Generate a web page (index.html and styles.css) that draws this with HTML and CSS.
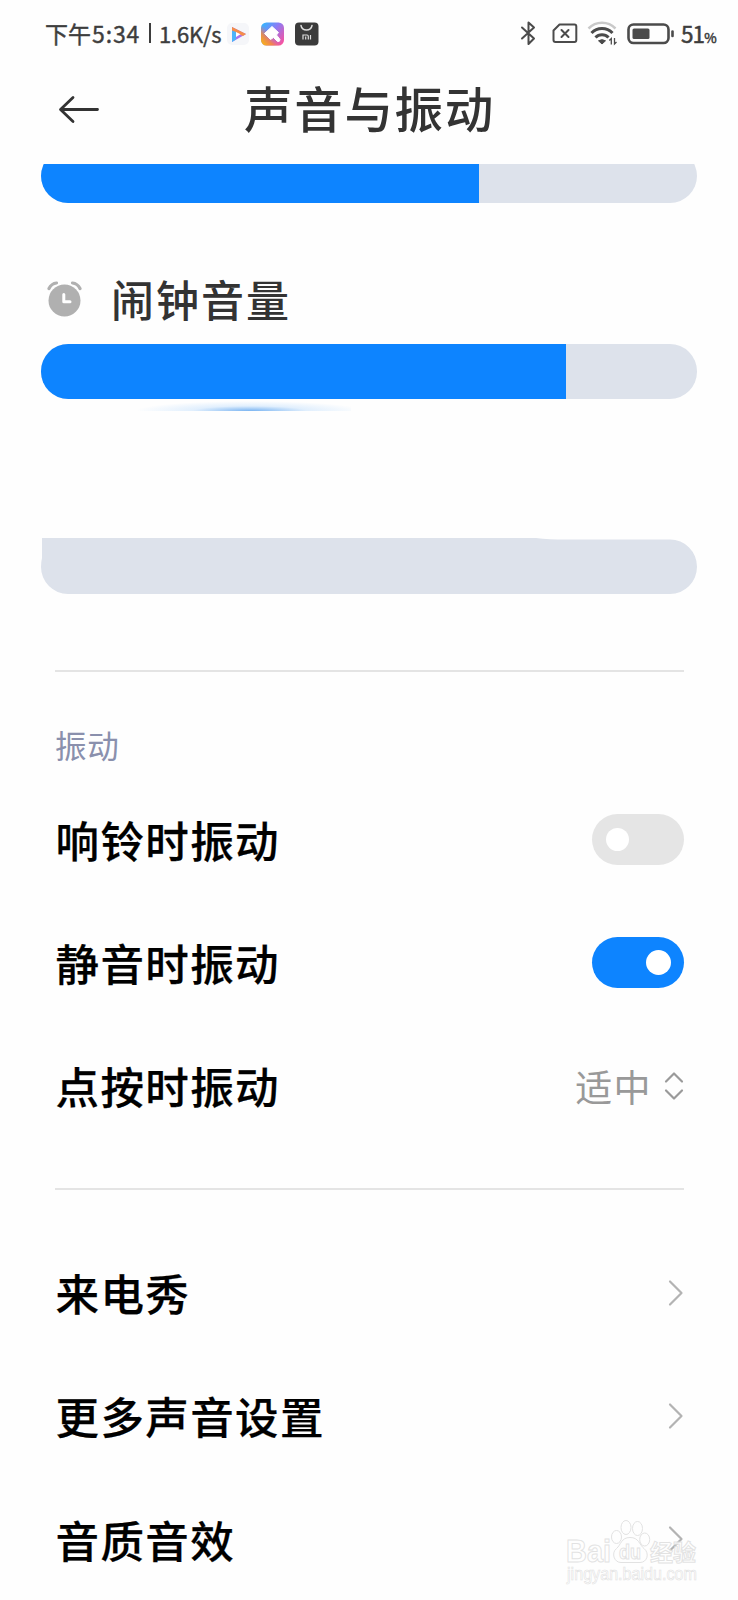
FILE: index.html
```html
<!DOCTYPE html>
<html lang="zh-CN">
<head>
<meta charset="utf-8">
<title>声音与振动</title>
<link rel="stylesheet" href="styles.css">
</head>
<body>
<div class="screen">
  <div class="status">
    <span class="clock">下午<b>5:34</b></span><span class="pipe"></span><span class="speed">1.6K/s</span>
    <svg class="apps" width="92" height="24" viewBox="0 0 92 24">
      <defs>
        <linearGradient id="theme" x1="0" y1=".1" x2="1" y2=".9"><stop offset="0" stop-color="#30b8ff"/><stop offset=".45" stop-color="#8c7cf5"/><stop offset="1" stop-color="#ff4f9a"/></linearGradient>
        <linearGradient id="warm" x1="0" y1="1" x2=".6" y2=".4"><stop offset="0" stop-color="#ffc400"/><stop offset=".45" stop-color="#ff8a30" stop-opacity=".8"/><stop offset=".8" stop-color="#ff5c80" stop-opacity="0"/></linearGradient>
      </defs>
      <rect x="0" y="1" width="22" height="22" rx="5" fill="#f5f6f9"/>
      <path d="M5 5L19 12 5 20Z" fill="#a873ee"/>
      <path d="M5 5L19 12 16 14 5 9Z" fill="#f58d4a"/>
      <path d="M5 8.500L9 10V17.500L5 20Z" fill="#4db4fa"/>
      <path d="M9 10L13.500 12.300 9 15Z" fill="#fff"/>
      <rect x="34" y="0.500" width="23" height="23" rx="5.500" fill="url(#theme)"/>
      <rect x="34" y="0.500" width="23" height="23" rx="5.500" fill="url(#warm)"/>
      <path d="M45 4.500L51.500 10.500 49.500 13 53 17.500Q53 20 50.500 19.500L46.500 15.500 43.500 17.500 37.500 11.500Z" fill="#fff" stroke="#fff" stroke-linejoin="round"/>
      <rect x="68" y="0.500" width="23.500" height="23" rx="4" fill="#3b3b3b"/>
      <path d="M74 3.500A5.600 5.600 0 0 0 85 3.500" fill="none" stroke="#ddd" stroke-width="1.500" stroke-linecap="round"/>
      <path d="M76 17.500V13H80Q81.300 13 81.300 14.500V17.500M78.700 14.500V17.500M83.500 13V17.500" fill="none" stroke="#ddd" stroke-width="1.200"/>
    </svg>
    <svg class="signals" width="156" height="26" viewBox="0 0 156 26">
      <g fill="none" stroke="#4b4b4b" stroke-width="2" stroke-linejoin="round" stroke-linecap="round">
        <path d="M2 7.500L14 18.500 8.500 24V2.500L14 7.500 2 18.500"/>
        <path d="M39.500 4.500H54.500Q56.300 4.500 56.300 6.500V20Q56.300 22 54.500 22H35.500Q33.500 22 33.500 20V10.500Z"/>
        <path d="M41.500 10L48.500 17M48.500 10L41.500 17"/>
      </g>
      <g fill="none" stroke="#4b4b4b" stroke-width="3">
        <path d="M68.500 8.500A19 19 0 0 1 95.500 8.500" stroke="#c9c9c9" stroke-width="2.500"/>
        <path d="M71.500 13A14.500 14.500 0 0 1 92.500 13"/>
        <path d="M75.500 17.500A9 9 0 0 1 88.500 17.500"/>
      </g>
      <path d="M78.500 20.800Q82 18.500 85.500 20.800L82 24Z" fill="#4b4b4b" stroke="#4b4b4b" stroke-linejoin="round"/>
      <path d="M91.300 24.500V18.500L89.300 20.500M94.500 18V24L96.500 22" fill="none" stroke="#4b4b4b" stroke-width="1.300"/>
      <rect x="108.500" y="4.500" width="40" height="18.500" rx="5" fill="none" stroke="#4b4b4b" stroke-width="2.600"/>
      <rect x="112.500" y="8.500" width="17" height="10.500" rx="1.500" fill="#4b4b4b"/>
      <path d="M152.500 11.500V16" stroke="#4b4b4b" stroke-width="2.600" stroke-linecap="round"/>
    </svg>
    <span class="charge">51<small>%</small></span>
  </div>
  <header class="header">
    <svg width="42" height="30" viewBox="0 0 42 30" fill="none" stroke="#333" stroke-width="2.800" stroke-linecap="round" stroke-linejoin="round"><path d="M39.500 15.500H3M15 3.500L2.500 15.500 15 27.500"/></svg>
    <h1>声音与振动</h1>
  </header>
  <main>
    <div class="clip"><div class="track"><div class="fill" style="width:437.500px"></div></div></div>
    <div class="volume">
      <svg width="36" height="38" viewBox="0 0 36 38">
        <circle cx="17.500" cy="20.500" r="16" fill="#b0b0b0"/>
        <path d="M2 8.500Q4.500 3.500 9.500 3M25.500 3Q30.500 3.500 33 8.500" fill="none" stroke="#b0b0b0" stroke-width="3.200" stroke-linecap="round"/>
        <path d="M16.800 14.500V21.700H23" fill="none" stroke="#fff" stroke-width="3" stroke-linecap="round" stroke-linejoin="round"/>
      </svg>
      <span>闹钟音量</span>
    </div>
    <div class="track"><div class="fill" style="width:525px"></div></div>
    <div class="glow"></div>
    <svg class="empty" width="656" height="56" viewBox="0 0 656 56"><path d="M1 0H495Q508 1.500 525 1.500H629A27 27.250 0 0 1 629 56H27A27 27 0 0 1 0 29Q0 24 1 20Z" fill="#dde2eb"/></svg>
    <hr class="rule">
    <h2>振动</h2>
    <section class="vibration">
      <div class="row"><span class="label">响铃时振动</span><i class="switch"></i></div>
      <div class="row"><span class="label">静音时振动</span><i class="switch on"></i></div>
      <div class="row"><span class="label">点按时振动</span><span class="value"><span>适中</span><svg width="20" height="30" viewBox="0 0 20 30" fill="none" stroke="#9a9a9a" stroke-width="2.200" stroke-linecap="round" stroke-linejoin="round"><path d="M2 10.500L10 2.500 18 10.500M2 19.500L10 27.500 18 19.500"/></svg></span></div>
    </section>
    <hr class="rule">
    <section class="more">
      <div class="row"><span class="label">来电秀</span><svg class="arrow" viewBox="0 0 16 28"><path d="M2 2.500L13.500 14 2 25.500"/></svg></div>
      <div class="row"><span class="label">更多声音设置</span><svg class="arrow" viewBox="0 0 16 28"><path d="M2 2.500L13.500 14 2 25.500"/></svg></div>
      <div class="row"><span class="label">音质音效</span><svg class="arrow" viewBox="0 0 16 28"><path d="M2 2.500L13.500 14 2 25.500"/></svg></div>
    </section>
  </main>
  <svg class="mark" width="144" height="74" viewBox="0 0 144 74">
    <g fill="#fff" stroke="#dedede" stroke-width="1">
      <text x="6" y="46" class="brand" textLength="45" lengthAdjust="spacingAndGlyphs">Bai</text>
      <ellipse cx="56.500" cy="21" rx="5" ry="6.500"/><ellipse cx="66" cy="11.500" rx="5" ry="7"/><ellipse cx="77.500" cy="12.500" rx="5" ry="7"/><ellipse cx="84.700" cy="23.500" rx="5" ry="6.500"/>
      <path d="M70 21.500C61 21.500 61 29 56.500 32.500C51 37 54 46.500 61 46.500H80C87 46.500 90 37.500 84 32.500C79 28.500 79 21.500 70 21.500Z"/>
      <text x="59" y="42.500" class="du" textLength="22" lengthAdjust="spacingAndGlyphs">du</text>
      <text x="90" y="44.500" class="cn" textLength="46">经验</text>
    </g>
    <text x="7" y="64" class="url" textLength="130" lengthAdjust="spacingAndGlyphs">jingyan.baidu.com</text>
  </svg>
</div>
</body>
</html>
```

FILE: styles.css
```css
* { box-sizing: border-box; }
body { margin: 0; background: #fefefe; }
.screen {
  position: relative;
  width: 738px;
  height: 1600px;
  overflow: hidden;
  font-family: "Noto Sans CJK SC", sans-serif;
  color: #000;
}
svg { display: block; flex: none; }

.status {
  display: flex;
  align-items: center;
  height: 66px;
  padding-left: 45px;
  font-size: 23px;
  color: #3d3d3d;
  white-space: nowrap;
}
.clock { width: 104px; -webkit-text-stroke: .4px #3d3d3d; }
.clock b { margin-left: 1px; font-weight: 400; letter-spacing: .9px; }
.pipe { width: 2px; height: 20px; background: #3d3d3d; }
.speed { width: 76px; padding-left: 8px; font-size: 22px; letter-spacing: -.2px; -webkit-text-stroke: .4px #3d3d3d; }
.apps { margin-top: 1px; }
.signals { margin-left: 201px; }
.charge { margin-left: 5px; font-size: 22.500px; letter-spacing: -.9px; -webkit-text-stroke: .5px #3d3d3d; }
.charge small { font-size: 13.500px; }

.header {
  display: grid;
  grid-template-columns: 42px 1fr 42px;
  align-items: center;
  height: 98px;
  padding: 0 58px 12px;
}
.header h1 {
  margin: -5px 0 0 1px;
  font-size: 48.500px;
  line-height: 60px;
  font-weight: 500;
  letter-spacing: 1.700px;
  text-align: center;
  white-space: nowrap;
  color: #333;
}

main { display: flex; flex-direction: column; }
.clip {
  display: flex;
  flex-direction: column;
  justify-content: flex-end;
  height: 39px;
  overflow: hidden;
}
.track {
  flex: none;
  width: 656px;
  height: 54.5px;
  margin-left: 41px;
  border-radius: 27.25px;
  overflow: hidden;
  background: #dde2eb;
}
.fill { height: 100%; background: #0d84ff; }

.volume {
  display: flex;
  align-items: center;
  gap: 28px;
  height: 141px;
  padding: 51px 0 0 47px;
  font-size: 43px;
  font-weight: 500;
  letter-spacing: 2px;
  color: #333;
}
.volume span { margin-top: -2px; line-height: 60px; }
.glow {
  width: 220px;
  height: 12.5px;
  margin-left: 131px;
  background: radial-gradient(ellipse 114px 10px at 54% 100%, rgba(50, 140, 235, .65), rgba(110, 180, 250, .2) 50%, transparent);
}
.empty { margin: 127px 0 0 41px; }

.rule {
  flex: none;
  width: 629px;
  height: 1.500px;
  margin: 76px 0 0 55px;
  border: 0;
  background: #e4e4e4;
}
h2 {
  height: 46px;
  margin: 49px 0 0 55px;
  font-size: 31.500px;
  line-height: 46px;
  font-weight: 400;
  letter-spacing: .700px;
  color: #8a90ad;
}
.vibration { padding-top: 11px; }
.row {
  display: flex;
  align-items: center;
  justify-content: space-between;
  height: 123.3px;
  padding: 0 54px 0 55.500px;
  font-size: 43.500px;
  font-weight: 500;
  letter-spacing: 1.4px;
}
.label { -webkit-text-stroke: .25px #000; }
.switch {
  width: 92px;
  height: 51px;
  padding: 14px 13.500px;
  border-radius: 26px;
  background: #e5e5e5;
}
.switch::before {
  content: "";
  display: block;
  width: 23.500px;
  height: 23.500px;
  border-radius: 50%;
  background: #fff;
}
.switch.on { padding: 13px; background: #0d84ff; }
.switch.on::before { width: 25px; height: 25px; margin-left: auto; }
.value {
  display: flex;
  align-items: center;
  gap: 12px;
  font-size: 37px;
  font-weight: 400;
  color: #999;
}
.vibration + .rule { margin-top: 41px; }
.more { padding-top: 41px; }
.arrow {
  width: 16px;
  height: 28px;
  fill: none;
  stroke: #b3b3b3;
  stroke-width: 2.200px;
  stroke-linecap: round;
  stroke-linejoin: round;
}

.mark { position: absolute; left: 560px; top: 1516px; opacity: .85; }
.brand { font: bold 31px "Liberation Sans", sans-serif; }
.du { font: bold 20px "Liberation Sans", sans-serif; }
.cn { font: bold 23px "Noto Sans CJK SC", sans-serif; }
.url { font: 18px "Liberation Sans", sans-serif; fill: #fff; stroke: #dcdcdc; stroke-width: .6px; }
```
